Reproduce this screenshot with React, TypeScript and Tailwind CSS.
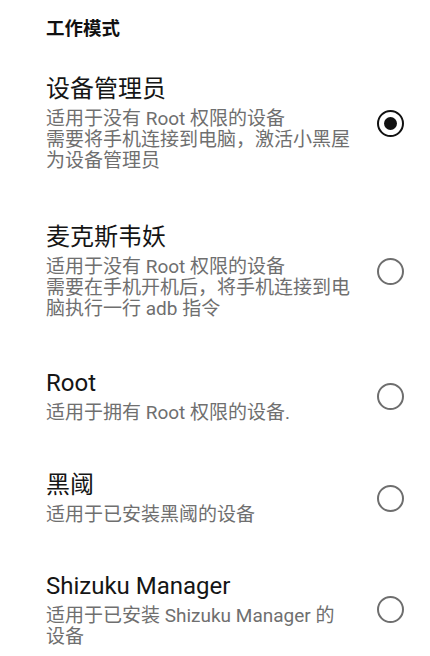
import React from "react";

type Mode = {
  title: string;
  desc: string;
  checked?: boolean;
  mt: string;
};

const modes: Mode[] = [
  {
    title: "设备管理员",
    desc: "适用于没有 Root 权限的设备\n需要将手机连接到电脑，激活小黑屋为设备管理员",
    checked: true,
    mt: "mt-[35px]",
  },
  {
    title: "麦克斯韦妖",
    desc: "适用于没有 Root 权限的设备\n需要在手机开机后，将手机连接到电脑执行一行 adb 指令",
    mt: "mt-[52px]",
  },
  {
    title: "Root",
    desc: "适用于拥有 Root 权限的设备.",
    mt: "mt-[50px]",
  },
  {
    title: "黑阈",
    desc: "适用于已安装黑阈的设备",
    mt: "mt-[48px]",
  },
  {
    title: "Shizuku Manager",
    desc: "适用于已安装 Shizuku Manager 的设备",
    mt: "mt-[47px]",
  },
];

function Radio({ checked }: { checked?: boolean }) {
  return (
    <div
      className={
        "flex h-[27px] w-[27px] items-center justify-center rounded-full border-[2.6px] " +
        (checked ? "border-[#111111]" : "border-[#6e6e6e]")
      }
    >
      {checked && <div className="h-[13px] w-[13px] rounded-full bg-[#111111]" />}
    </div>
  );
}

export default function App() {
  return (
    <div
      className="h-[656px] w-full overflow-hidden bg-white pl-[46px] pt-[19px]"
      style={{ fontFamily: "Roboto, 'Noto Sans CJK SC', sans-serif" }}
    >
      <div className="text-[18.5px] font-bold leading-[21px] text-[#111111]">工作模式</div>
      {modes.map((m) => (
        <div key={m.title} className={"flex items-center " + m.mt}>
          <div className="w-[306px]">
            <div className="text-[24px] leading-[28px] text-[#151515]">{m.title}</div>
            <div className="mt-[5px] whitespace-pre-line text-[19px] leading-[21px] text-[#6f6f6f]">
              {m.desc}
            </div>
          </div>
          <div className="ml-[25px]">
            <Radio checked={m.checked} />
          </div>
        </div>
      ))}
    </div>
  );
}
